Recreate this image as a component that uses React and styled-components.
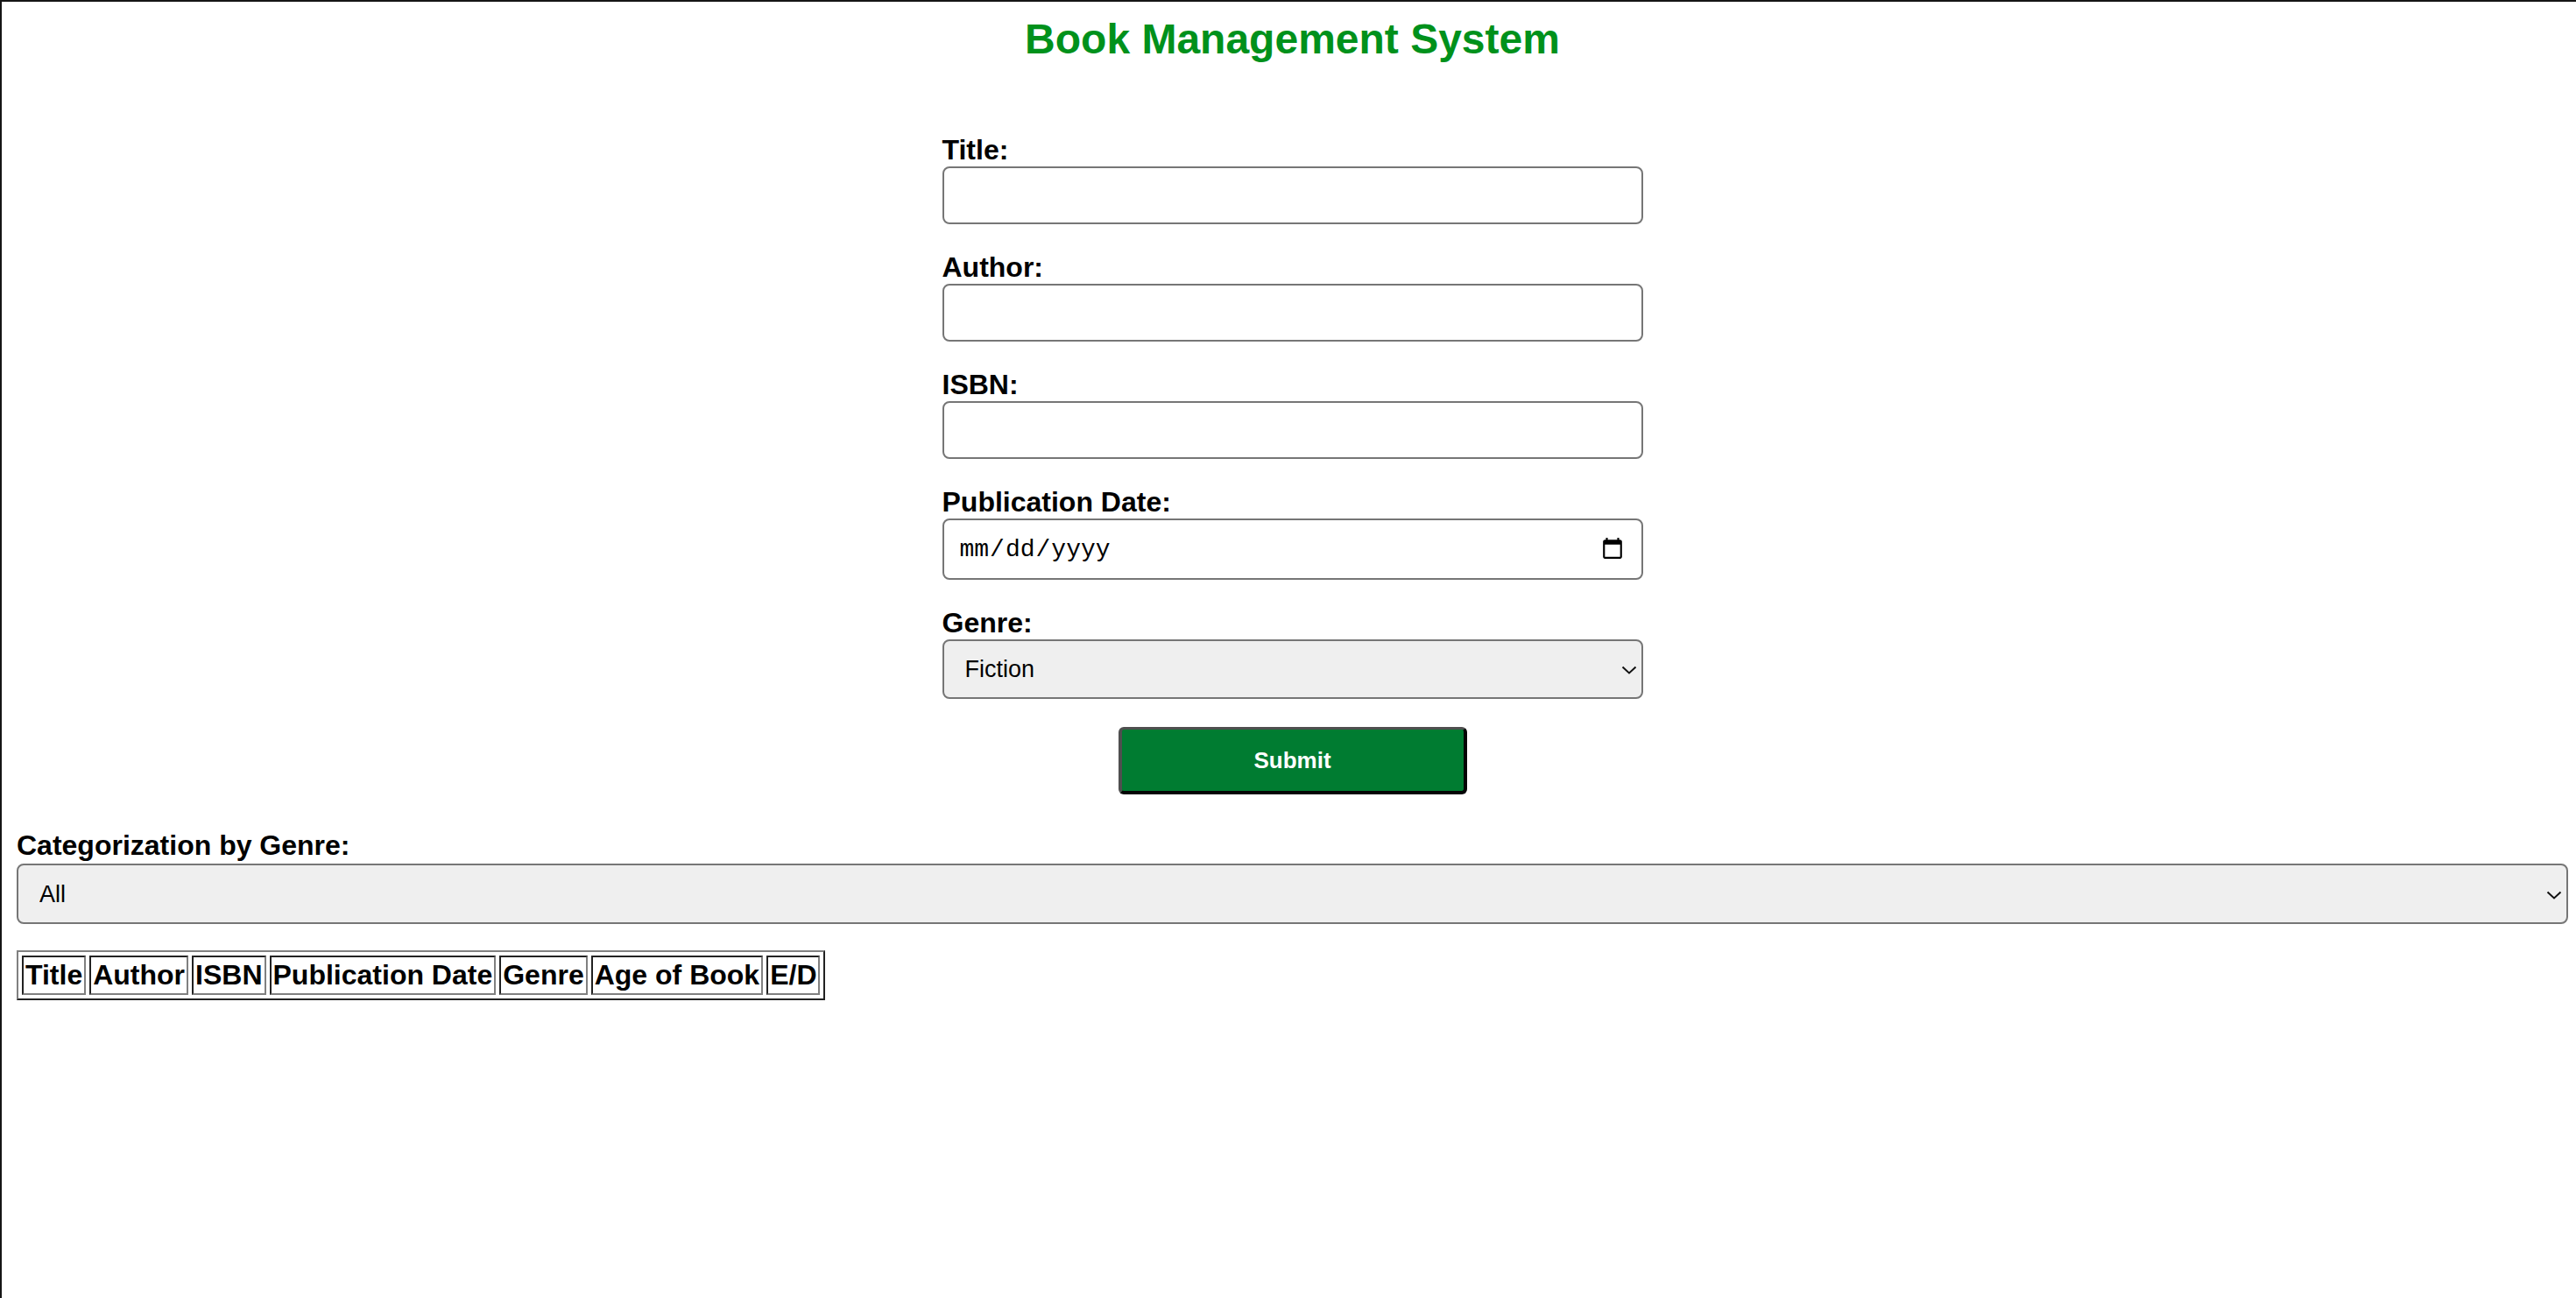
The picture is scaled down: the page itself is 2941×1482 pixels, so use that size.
import React from "react";
import styled, { createGlobalStyle } from "styled-components";

const GlobalStyle = createGlobalStyle`
  html, body {
    margin: 0;
    padding: 0;
    background: #ffffff;
    overflow: hidden;
  }
  body {
    font-family: "Liberation Sans", Arial, sans-serif;
    color: #000;
  }
`;

const Page = styled.div`
  box-sizing: border-box;
  min-height: 100vh;
  border-top: 2px solid #151515;
  border-left: 2px solid #151515;
  padding: 0 9px 40px 17px;
`;

const Heading = styled.h1`
  margin: 15px 0 0;
  text-align: center;
  font-size: 48px;
  font-weight: 700;
  line-height: 55px;
  color: #00911b;
`;

const Form = styled.form`
  width: 800px;
  margin: 82px auto 0;
  display: flex;
  flex-direction: column;
  align-items: stretch;
`;

const Field = styled.div`
  display: flex;
  flex-direction: column;
  margin-bottom: ${(p) => p.$gap || 32}px;
`;

const Label = styled.label`
  display: block;
  font-size: 32px;
  font-weight: 700;
  line-height: 34px;
  margin-bottom: ${(p) => p.$gap ?? 2}px;
`;

const TextInput = styled.input`
  box-sizing: border-box;
  width: 100%;
  height: ${(p) => p.$h || 66}px;
  margin: 0;
  padding: 0 17px;
  border: 2px solid #767676;
  border-radius: 8px;
  background: #fff;
  font-family: "Liberation Sans", Arial, sans-serif;
  font-size: 25px;
  color: #000;
  outline: none;
`;

const DateInput = styled(TextInput)`
  font-family: "Liberation Mono", "DejaVu Sans Mono", monospace;
  font-size: 28px;
`;

const SelectWrap = styled.div`
  position: relative;
  width: 100%;
`;

const Select = styled.select`
  box-sizing: border-box;
  display: block;
  width: 100%;
  height: ${(p) => p.$h || 68}px;
  margin: 0;
  padding: 0 40px 0 24px;
  border: 2px solid #767676;
  border-radius: 8px;
  background-color: #efefef;
  font-family: "Liberation Sans", Arial, sans-serif;
  font-size: 27px;
  color: #000;
  outline: none;
  appearance: none;
  -webkit-appearance: none;
`;

const Chevron = styled.svg`
  position: absolute;
  right: 7px;
  top: 50%;
  width: 18px;
  height: 10px;
  margin-top: -4px;
  pointer-events: none;
`;

const SubmitButton = styled.button`
  box-sizing: border-box;
  align-self: center;
  width: 398px;
  height: 77px;
  margin: 0;
  border-style: solid;
  border-width: 3px 4px 4px 4px;
  border-color: #4f4f4f #050505 #050505 #4f4f4f;
  border-radius: 6px;
  background: #007c31;
  color: #fff;
  font-family: "Liberation Sans", Arial, sans-serif;
  font-size: 26px;
  font-weight: 700;
  cursor: pointer;
`;

const FilterBlock = styled.div`
  margin-top: 41px;
  display: flex;
  flex-direction: column;
`;

const Table = styled.table`
  margin-top: 30px;
  border-collapse: separate;
  border-spacing: 4px;
  border-style: solid;
  border-width: 2px;
  border-color: #808080 #222 #222 #808080;
`;

const HeadCell = styled.th`
  padding: 3px 2px;
  border-style: solid;
  border-width: 2px;
  border-color: #222 #808080 #808080 #222;
  font-size: 32px;
  font-weight: 700;
  line-height: 35px;
  white-space: nowrap;
`;

const fields = [
  { id: "title", label: "Title:" },
  { id: "author", label: "Author:" },
  { id: "isbn", label: "ISBN:" },
];

const genres = ["Fiction", "Non-Fiction", "Mystery", "Science Fiction", "Fantasy"];

const columns = [
  "Title",
  "Author",
  "ISBN",
  "Publication Date",
  "Genre",
  "Age of Book",
  "E/D",
];

function Dropdown({ id, value, options, h }) {
  return (
    <SelectWrap>
      <Select id={id} defaultValue={value} $h={h}>
        {options.map((o) => (
          <option key={o}>{o}</option>
        ))}
      </Select>
      <Chevron viewBox="0 0 18 10" aria-hidden="true">
        <path d="M1.5 1.5 L9 8.5 L16.5 1.5" fill="none" stroke="#111" strokeWidth="2" />
      </Chevron>
    </SelectWrap>
  );
}

export default function App() {
  return (
    <>
      <GlobalStyle />
      <Page>
        <Heading>Book Management System</Heading>
        <Form onSubmit={(e) => e.preventDefault()}>
          {fields.map((f) => (
            <Field key={f.id}>
              <Label htmlFor={f.id}>{f.label}</Label>
              <TextInput id={f.id} type="text" />
            </Field>
          ))}
          <Field>
            <Label htmlFor="pubdate">Publication Date:</Label>
            <DateInput id="pubdate" type="date" $h={70} />
          </Field>
          <Field>
            <Label htmlFor="genre">Genre:</Label>
            <Dropdown id="genre" value="Fiction" options={genres} h={68} />
          </Field>
          <SubmitButton type="submit">Submit</SubmitButton>
        </Form>
        <FilterBlock>
          <Label htmlFor="filter" $gap={4}>
            Categorization by Genre:
          </Label>
          <Dropdown id="filter" value="All" options={["All", ...genres]} h={69} />
        </FilterBlock>
        <Table>
          <thead>
            <tr>
              {columns.map((c) => (
                <HeadCell key={c}>{c}</HeadCell>
              ))}
            </tr>
          </thead>
          <tbody />
        </Table>
      </Page>
    </>
  );
}
